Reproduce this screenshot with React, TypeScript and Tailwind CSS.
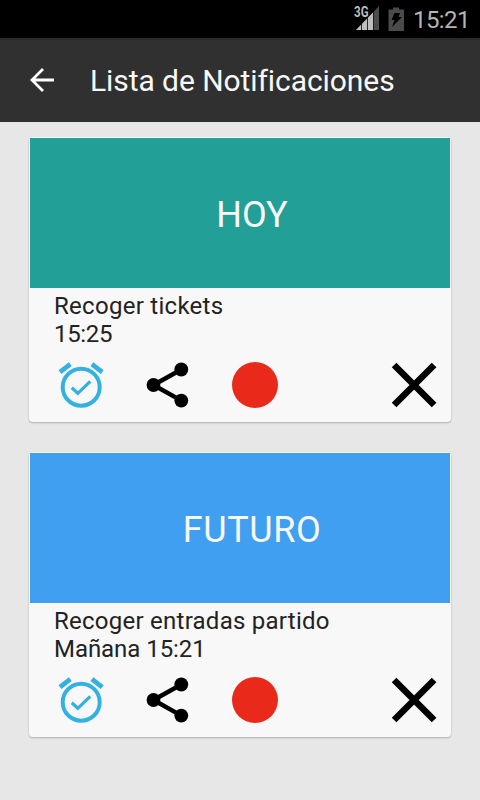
import React from "react";

function StatusBar() {
  return (
    <div className="flex h-[38px] items-center justify-end bg-black pr-[9px]">
      <svg width="26" height="30" viewBox="354 4 26 30" className="mr-2">
        <path d="M356 30 L379 6 V30 Z" fill="#4b4b4b" />
        <path d="M356 30 L373.500 12 V30 Z" fill="#bebebe" />
        <path d="M361.5 20V30M367.5 16V30M373.500 8V30" stroke="#000" strokeWidth="0.8" />
        <text x="354" y="17" fontSize="14" fontWeight="700" fontFamily="Roboto, sans-serif" fill="#bebebe" stroke="#000" strokeWidth="1.2" paintOrder="stroke" textLength="14.500" lengthAdjust="spacingAndGlyphs">3G</text>
      </svg>
      <svg width="16" height="24" viewBox="388 6 16 24" className="mr-[10px]">
        <path d="M393 6.5h6v2h5V30h-15.5V8.500h4.500Z" fill="#4b4b4b" />
        <path d="M394.500 12h5.500l-1.500 4h3.500l-10 10 2.500-7h-3Z" fill="#000" />
      </svg>
      <span className="relative top-px -left-px text-[24px] leading-7 tracking-[-0.55px] text-[#b4b4b4]">15:21</span>
    </div>
  );
}

function Toolbar() {
  return (
    <header className="flex h-[84px] items-center border-t-2 border-[#292929] bg-[#303030] pl-[29px]">
      <svg width="26" height="28" viewBox="29 67 26 28" fill="none" stroke="#fff" strokeWidth="2.8">
        <path d="M54 80H32M43 69L32 80L43 91" />
      </svg>
      <h1 className="ml-[35px] text-[30px] leading-9 tracking-[-0.07px] whitespace-nowrap text-[#f8f8f8]">Lista de Notificaciones</h1>
    </header>
  );
}

function AlarmIcon() {
  return (
    <svg width="54" height="54" viewBox="54 358 54 54" fill="none" stroke="#33b1e1">
      <circle cx="81.200" cy="387.200" r="18.500" strokeWidth="4" />
      <path d="M60 372.200L70.300 364.200M102.200 372.200L91.900 364.200" strokeWidth="4.800" />
      <path d="M71.800 387.800L77.800 393.300L90.300 381.300" strokeWidth="3.200" />
    </svg>
  );
}

function ShareIcon() {
  return (
    <svg width="54" height="54" viewBox="140 358 54 54">
      <path d="M181.300 369.500L153.500 385L181.300 400.600" fill="none" stroke="#000" strokeWidth="4.500" />
      <circle cx="181.300" cy="369.500" r="6.900" />
      <circle cx="153.500" cy="385" r="6.900" />
      <circle cx="181.300" cy="400.600" r="6.900" />
    </svg>
  );
}

function CloseIcon() {
  return (
    <svg width="54" height="54" viewBox="387 358 54 54" stroke="#000" strokeWidth="6.600">
      <path d="M394.100 365L434.100 405M434.100 365L394.100 405" />
    </svg>
  );
}

interface CardProps {
  heading: string;
  headingClass: string;
  color: string;
  title: string;
  titleClass: string;
  time: string;
  timeClass: string;
}

function Card({ heading, headingClass, color, title, titleClass, time, timeClass }: CardProps) {
  return (
    <article className="h-[285px] rounded-[4px] bg-[#f8f8f8] px-px pt-px shadow-[0_1px_2px_rgba(0,0,0,0.25)]">
      <div className={`flex h-[150px] items-center justify-center pl-6 pt-[3px] text-[36px] text-[#f8f8f8] ${color}`}>
        <span className={headingClass}>{heading}</span>
      </div>
      <div className="h-[70px] pl-6 pt-1 text-[24px] leading-7 text-[#222]">
        <p className={titleClass}>{title}</p>
        <p className={timeClass}>{time}</p>
      </div>
      <div className="flex items-center pl-6 pr-[9px]">
        <AlarmIcon />
        <span className="ml-8"><ShareIcon /></span>
        <span className="ml-[38px] h-[46px] w-[46px] rounded-full bg-[#e92a1b]" />
        <span className="ml-auto"><CloseIcon /></span>
      </div>
    </article>
  );
}

export default function App() {
  return (
    <div className="h-[800px] w-[480px] overflow-hidden bg-[#e7e7e7] font-[Roboto,sans-serif]">
      <StatusBar />
      <Toolbar />
      <main className="flex flex-col gap-[30px] px-[29px] pt-[15px]">
        <Card heading="HOY" headingClass="tracking-normal" color="bg-[#22a098]" title="Recoger tickets" titleClass="tracking-[0.28px]" time="15:25" timeClass="tracking-[-0.35px]" />
        <Card heading="FUTURO" headingClass="tracking-[0.6px]" color="bg-[#409ff0]" title="Recoger entradas partido" titleClass="tracking-[0.25px]" time="Mañana 15:21" timeClass="tracking-[-0.05px]" />
      </main>
    </div>
  );
}
